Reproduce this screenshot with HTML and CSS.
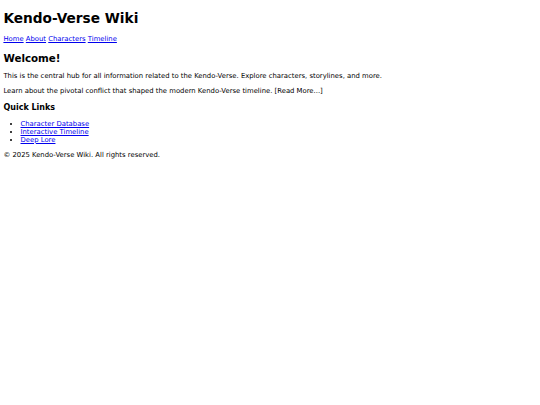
FILE: index.html
```html
<!DOCTYPE html>
<html lang="en">
<head>
<meta charset="utf-8">
<title>Kendo-Verse Wiki</title>
<link rel="stylesheet" href="styles.css">
</head>
<body>
<header>
<h1 class="title">Kendo-Verse Wiki</h1>
<nav class="nav"><a href="#">Home</a> <a href="#">About</a> <a href="#">Characters</a> <a href="#">Timeline</a></nav>
</header>
<main>
<h2 class="welcome">Welcome!</h2>
<p class="para">This is the central hub for all information related to the Kendo-Verse. Explore characters, storylines, and more.</p>
<p class="para">Learn about the pivotal conflict that shaped the modern Kendo-Verse timeline. [Read More...]</p>
<h3 class="quick">Quick Links</h3>
<ul class="links">
<li><a href="#">Character Database</a></li>
<li><a href="#">Interactive Timeline</a></li>
<li><a href="#">Deep Lore</a></li>
</ul>
</main>
<footer class="foot">© 2025 Kendo-Verse Wiki. All rights reserved.</footer>
</body>
</html>
```
FILE: styles.css
```css
html { background: #fff; }
body {
  margin: 3.42px;
  font-family: "DejaVu Sans", sans-serif;
  font-size: 6.85px;
  color: #000;
}
a { color: #0000ee; }
.title { font-size: 13.7px; margin: 6.5px 0 9.1px; }
.nav { margin: 0; }
.welcome { font-size: 10.3px; margin: 8.5px 0; }
.para { margin: 6.85px 0; }
.quick { font-size: 8.0px; margin: 8.0px 0; }
.links { margin: 6.85px 0; padding-left: 17.1px; }
.foot { margin: 0; }
```
